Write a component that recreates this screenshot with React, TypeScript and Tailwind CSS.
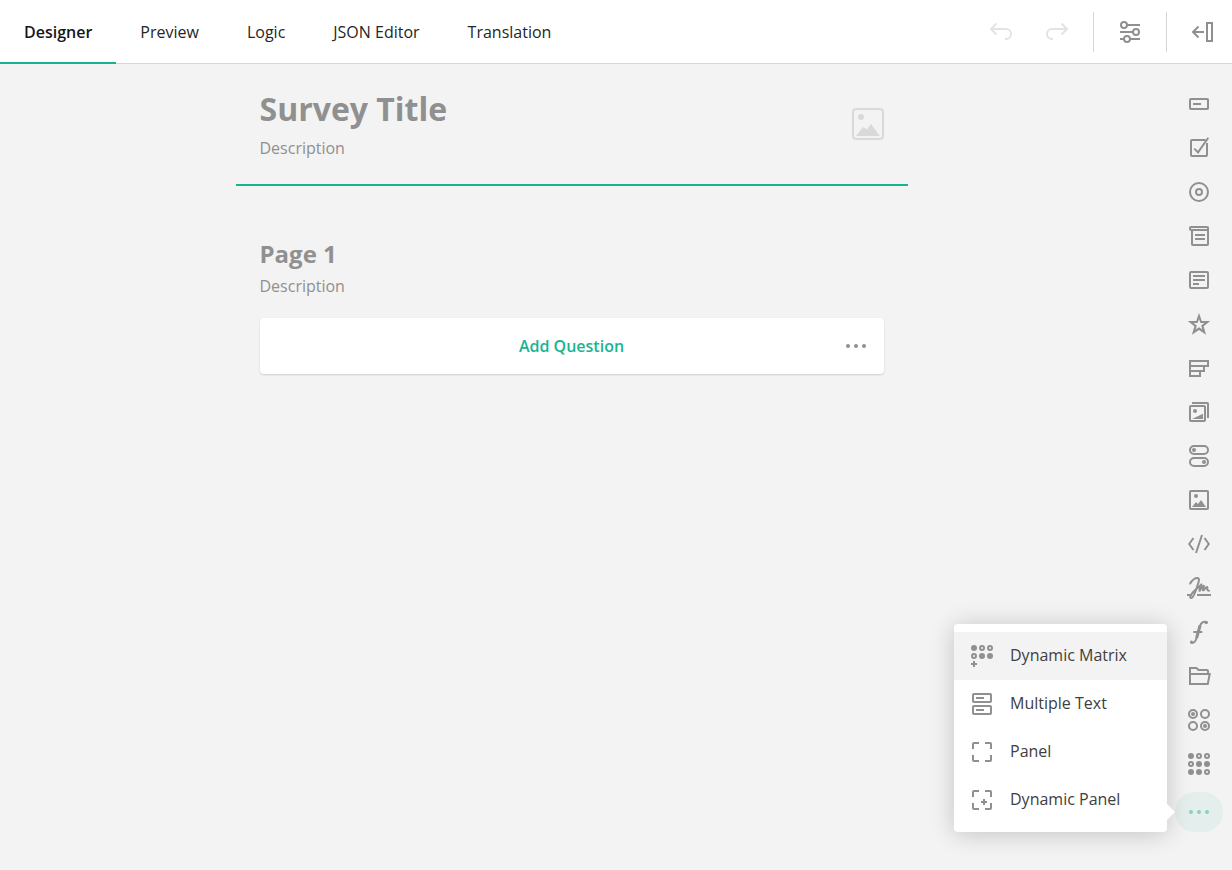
import React from "react";

type IconProps = { children: React.ReactNode; className?: string };

function Icon({ children, className = "text-[#909090]" }: IconProps) {
  return (
    <svg width="24" height="24" viewBox="0 0 24 24" fill="none" stroke="currentColor" strokeWidth="2" className={`shrink-0 ${className}`}>
      {children}
    </svg>
  );
}

function Dot({ x, y, r = 2 }: { x: number; y: number; r?: number }) {
  return <circle cx={x} cy={y} r={r} fill="currentColor" stroke="none" />;
}

function Ring({ x, y, r = 2 }: { x: number; y: number; r?: number }) {
  return <circle cx={x} cy={y} r={r} />;
}

const tabs = ["Designer", "Preview", "Logic", "JSON Editor", "Translation"];

const tools: { name: string; art: React.ReactNode }[] = [
  { name: "Single-Line Input", art: <><rect x="3" y="7" width="18" height="10" rx="1" /><path d="M6 12h8" /></> },
  { name: "Checkboxes", art: <><path d="M18.5 4H5a1 1 0 0 0-1 1v14a1 1 0 0 0 1 1h14a1 1 0 0 0 1-1V7" /><path d="M7.3 12.6l3.7 3.8L21.3 1.7" /></> },
  { name: "Radio Button Group", art: <><Ring x={12} y={12} r={9} /><Ring x={12} y={12} r={3} /></> },
  { name: "Dropdown", art: <><path d="M5 7v13a1 1 0 0 0 1 1h14a1 1 0 0 0 1-1V4a1 1 0 0 0-1-1H4a1 1 0 0 0-1 1v1a1 1 0 0 0 1 1h17" /><path d="M8 11h10M8 15h10" /></> },
  { name: "Long Text", art: <><rect x="3" y="4" width="18" height="16" rx="1" /><path d="M6 8h12M6 12h12M6 16h6" /></> },
  { name: "Rating Scale", art: <path fill="currentColor" fillRule="evenodd" stroke="none" d="M12 1l2.800 8H23.300l-6.700 5.200 2.500 8.600L12 17.900l-7.100 4.900 2.500-8.600L.7 9h8.500zM12 7l-1.400 4H6.600l3.200 2.400-1.200 4L12 15.200l3.400 2.200-1.200-4 3.200-2.400h-4z" /> },
  { name: "Ranking", art: <path d="M3 5h18v5H3zM3 10h14v5H3zM3 15h10v5H3z" /> },
  { name: "Image Picker", art: <><rect x="3" y="6" width="15" height="15" rx="1" /><path d="M5 3h15a1 1 0 0 1 1 1v14" /><Dot x={8} y={11} /><path d="M5 19l11-5.3V19z" fill="currentColor" stroke="none" /></> },
  { name: "Yes/No", art: <><rect x="3" y="2" width="18" height="8" rx="4" /><rect x="3" y="14" width="18" height="8" rx="4" /><Dot x={7} y={6} /><Dot x={17} y={18} /></> },
  { name: "Image", art: <><rect x="3" y="3" width="18" height="18" rx="1" /><Dot x={9} y={8} /><path d="M5 19l4-5 2 2 3-4 5 7z" fill="currentColor" stroke="none" /></> },
  { name: "HTML", art: <path d="M6.500 6L2.200 12l4.300 6M17.500 6l4.300 6-4.300 6M15 3L9 21" /> },
  { name: "Signature", art: <><path d="M0 19h4.500M10 19h14" /><path strokeLinecap="round" strokeLinejoin="round" d="M3.200 7.500C5 3.800 8.500 1.600 11 2.200c1.800.6.8 4-.8 8.200C8.400 15.500 6.500 22.300 4.100 22.100c-2.200-.4.3-5 3.900-7.900 3.100-2.500 5.200-4.400 6.400-5.800-.5 1.700-2.500 5.800-1.900 6.400.6.400 2.600-5.400 4.200-5.100.9.200-1.500 4.600-.5 4.900.9.200 2.600-4 3.900-3.600 1.100.4-1.200 3.700 1.900 3.700" /></> },
  { name: "Expression", art: <><path strokeWidth="2" strokeLinecap="round" d="M4.300 22.600c2.800.9 4.200-1.200 5.200-4.600L12.800 6.500c.9-3.300 3.400-5.500 6.700-4.500" /><path d="M6.300 12h9" /><Dot x={4.500} y={22} r={1.600} /><Dot x={19.300} y={2.600} r={1.600} /><path strokeWidth="3" d="M9.600 18L13.100 5.500" /></> },
  { name: "File Upload", art: <path d="M3 10V4h6.500l2 2H20a1 1 0 0 1 1 1v3M3 10V20h17.800l1.900-10H3" /> },
  { name: "Single-Choice Matrix", art: <><Ring x={6} y={6} r={4} /><Ring x={18} y={6} r={4} /><Ring x={6} y={18} r={4} /><Ring x={18} y={18} r={4} /><Dot x={6} y={6} /><Dot x={18} y={18} /></> },
  { name: "Multi-Choice Matrix", art: <><Dot x={4} y={4} r={3} /><Ring x={12} y={4} /><Ring x={20} y={4} /><Ring x={4} y={12} /><Dot x={12} y={12} r={3} /><Dot x={20} y={12} r={3} /><Dot x={4} y={20} r={3} /><Dot x={12} y={20} r={3} /><Ring x={20} y={20} /></> },
];

const corners = <path d="M9 3H4a1 1 0 0 0-1 1V9M15 3h5a1 1 0 0 1 1 1V9M9 21H4a1 1 0 0 1-1-1V15M15 21h5a1 1 0 0 0 1-1V15" />;

const menu: { name: string; art: React.ReactNode }[] = [
  { name: "Dynamic Matrix", art: <><Dot x={4} y={4} r={3} /><Ring x={12} y={4} /><Ring x={20} y={4} /><Ring x={4} y={12} /><Dot x={12} y={12} r={3} /><Dot x={20} y={12} r={3} /><path d="M1 20h6M4 17v6" /></> },
  { name: "Multiple Text", art: <><rect x="3" y="2" width="18" height="8" rx="1" /><rect x="3" y="14" width="18" height="8" rx="1" /><path d="M6 6h8M6 18h8" /></> },
  { name: "Panel", art: corners },
  { name: "Dynamic Panel", art: <>{corners}<path d="M11 14h6M14 11v6" /></> },
];

function Dots({ className }: { className: string }) {
  return <Icon className={className}><Dot x={4} y={12} /><Dot x={12} y={12} /><Dot x={20} y={12} /></Icon>;
}

function TopBar() {
  return (
    <header className="flex h-16 shrink-0 justify-between border-b border-[#d6d6d6] bg-white">
      <nav className="flex h-16">
        {tabs.map((t, i) => (
          <button
            key={t}
            className={
              i === 0
                ? "h-16 border-b-2 border-[#19b394] px-6 pt-0.5 font-semibold text-[#161616]"
                : "h-16 border-b-2 border-transparent px-6 pt-0.5 text-[#262626]"
            }
          >
            {t}
          </button>
        ))}
      </nav>
      <div className="flex h-16 items-center pr-[18px]">
        <Icon className="text-[#e3e3e3]">
          <path d="M7.500 3.500L2 9l5.500 5.500M2 9h15a5 5 0 0 1 0 10H16" />
        </Icon>
        <Icon className="ml-8 text-[#e3e3e3]">
          <path d="M16.500 3.500L22 9l-5.500 5.500M22 9H7a5 5 0 0 0 0 10H8" />
        </Icon>
        <div className="ml-6 h-10 w-px bg-[#d6d6d6]" />
        <Icon className="ml-6 text-[#909090]">
          <Ring x={6} y={5} r={3} /><Ring x={18} y={12} r={3} /><Ring x={9} y={19} r={3} />
          <path d="M9 5h13M2 12h13M2 19h4M12 19h10" />
        </Icon>
        <div className="ml-6 h-10 w-px bg-[#d6d6d6]" />
        <Icon className="ml-[23px] text-[#909090]">
          <path d="M17 3h5v18h-5zM3 12h11M8.500 6.500L3 12l5.500 5.500" />
        </Icon>
      </div>
    </header>
  );
}

function Canvas() {
  return (
    <main className="flex flex-1 flex-col items-center">
      <section className="flex h-[122px] w-[672px] justify-between border-b-2 border-[#19b394] px-6 pt-6">
        <div className="-ml-[0.5px]">
          <h1 className="pt-px text-[32px] leading-10 font-bold">Survey Title</h1>
          <p className="mt-[7px] leading-6">Description</p>
        </div>
        <svg className="mt-5 text-[#d9d9d9]" width="32" height="32" viewBox="0 0 32 32" fill="none" stroke="currentColor" strokeWidth="2">
          <rect x="1" y="1" width="30" height="30" rx="3" />
          <Dot x={9} y={9} r={3} />
          <path d="M4 28l7-9 4 2.500 4-5.500 9 12z" fill="currentColor" stroke="none" />
        </svg>
      </section>
      <section className="w-[672px] px-6 pt-[52px]">
        <h2 className="-ml-[0.5px] text-2xl leading-8 font-bold">Page 1</h2>
        <p className="mt-1 -ml-[0.5px] leading-6">Description</p>
        <div className="mt-5 grid h-14 grid-cols-[40px_1fr_40px] items-center rounded bg-white shadow-[0_1px_2px_rgba(0,0,0,0.15)]">
          <button className="col-start-2 pr-px text-center font-semibold text-[#19b394]">Add Question</button>
          <Dots className="text-[#909090]" />
        </div>
      </section>
    </main>
  );
}

function Toolbox() {
  return (
    <aside className="flex w-[88px] flex-col items-end gap-1 pt-5 pr-[9px]">
      {tools.map((t) => (
        <button key={t.name} aria-label={t.name} className="flex h-10 w-12 items-center justify-center">
          <Icon>{t.art}</Icon>
        </button>
      ))}
      <div className="relative mt-1 flex h-10 w-12 items-center justify-center rounded-full bg-[#e4eeec]">
        <Dots className="text-[#86d3c3]" />
        <div className="absolute right-14 bottom-0 h-[208px] w-[213px] rounded bg-white py-2 shadow-[0_2px_24px_rgba(0,0,0,0.2)]">
          {menu.map((m, i) => (
            <button
              key={m.name}
              className={
                i === 0
                  ? "flex h-12 w-full items-center gap-4 bg-[#f3f3f3] px-4 text-[#404040]"
                  : "flex h-12 w-full items-center gap-4 px-4 text-[#404040]"
              }
            >
              <Icon>{m.art}</Icon>
              <span className="-mt-0.5">{m.name}</span>
            </button>
          ))}
          <svg className="absolute bottom-3 left-full" width="8" height="16" viewBox="0 0 8 16">
            <path d="M0 0l8 8-8 8z" fill="white" />
          </svg>
        </div>
      </div>
    </aside>
  );
}

export default function App() {
  return (
    <div className="flex h-[870px] w-[1232px] flex-col overflow-hidden bg-[#f3f3f3] font-['Open_Sans',sans-serif] text-base text-[#909090]">
      <TopBar />
      <div className="flex flex-1">
        <Canvas />
        <Toolbox />
      </div>
    </div>
  );
}
